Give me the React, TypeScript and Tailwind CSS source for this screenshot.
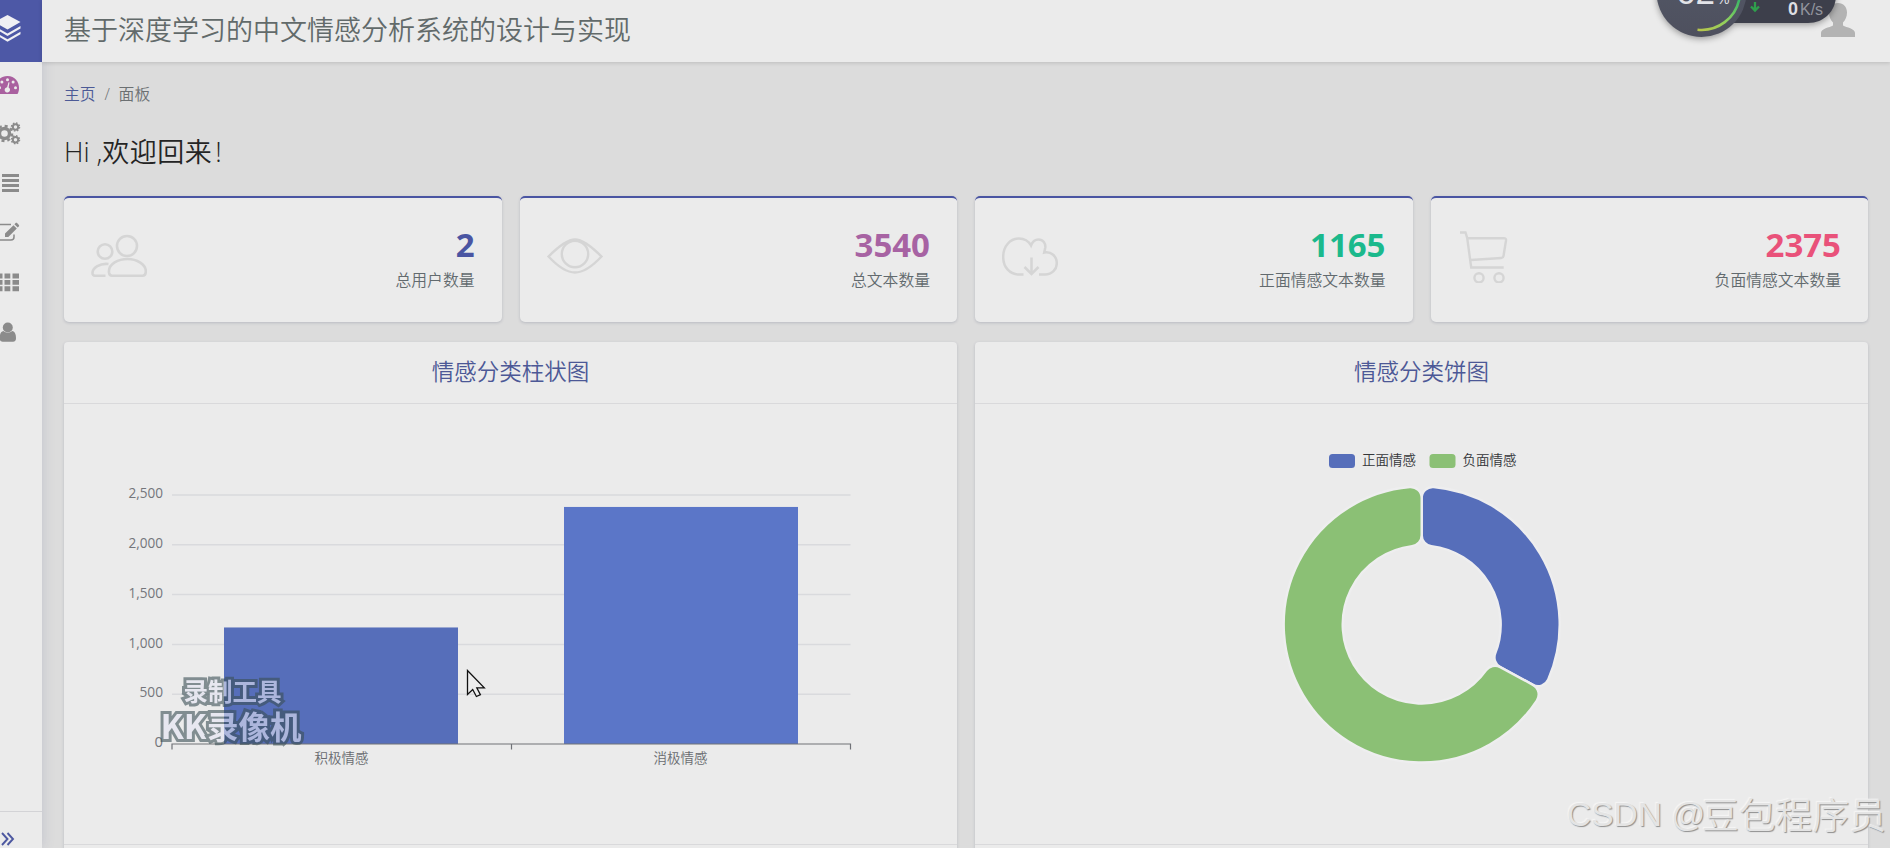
import type { ReactNode } from "react";

const CJK = "font-['Open_Sans','Noto_Sans_CJK_SC',sans-serif]";

type Stat = {
  label: string;
  value: string;
  color: string;
  icon: ReactNode;
};

function PeopleIcon() {
  return (
    <svg width="56" height="54" viewBox="0 0 56 54" fill="none" stroke="currentColor" strokeWidth="2.6">
      <circle cx="36" cy="17" r="10" />
      <circle cx="14" cy="22.5" r="7.3" />
      <path d="M18 43.5c-1-9 10-13.5 18.5-13.5S56 35 54.7 43.5c-.3 2.3-1.2 3.2-3 3.2H21c-1.8 0-2.700-1-3-3.200z" />
      <path d="M17.5 35c-9-1-15.5 4-16 8.5-.2 2.200.8 3.200 2.500 3.200h10.500" />
    </svg>
  );
}

function EyeIcon() {
  return (
    <svg width="56" height="54" viewBox="0 0 56 54" fill="none" stroke="currentColor" strokeWidth="2.4">
      <path d="M1.5 27.500C9 20 19 10.500 28 10.500S47 20 54.500 27.500C47 35.500 38 43.500 28 43.500S9 35.500 1.500 27.500z" />
      <circle cx="28" cy="25" r="13.200" />
    </svg>
  );
}

function CloudIcon() {
  return (
    <svg width="56" height="54" viewBox="0 0 56 54" fill="none" stroke="currentColor" strokeWidth="2.5">
      <path d="M21.5 45.500H17C8 45.500 1.200 38.500 1.200 28S8 9.500 17 9.500c5 0 9.500 2.500 12 7 1.500-4 4-6 7.500-6 4.500 0 7.500 4 6.700 8.500l-1 4.500c7-1.500 12.600 4 12.600 10.800C54.800 40.500 50 45.500 43 45.500h-6" />
      <path d="M29.500 28.500V45M22.500 38l7 7 7-7" />
    </svg>
  );
}

function CartIcon() {
  return (
    <svg width="56" height="54" viewBox="0 0 56 54" fill="none" stroke="currentColor" strokeWidth="2.4">
      <path d="M2 3.500h5.500L9.200 9l4 29.500h32.500" />
      <path d="M9.500 9.200H46c1.500 0 2.200.8 2 2.300L45.500 27c-.2 1.200-.9 1.900-2.200 2L13 31" />
      <circle cx="21" cy="48.800" r="4.600" />
      <circle cx="41" cy="48.800" r="4.600" />
    </svg>
  );
}

const stats: Stat[] = [
  { label: "总用户数量", value: "2", color: "text-[#4a55a2]", icon: <PeopleIcon /> },
  { label: "总文本数量", value: "3540", color: "text-[#a763a3]", icon: <EyeIcon /> },
  { label: "正面情感文本数量", value: "1165", color: "text-[#1bb98c]", icon: <CloudIcon /> },
  { label: "负面情感文本数量", value: "2375", color: "text-[#e9527a]", icon: <CartIcon /> },
];

function Sidebar() {
  return (
    <aside className="flex h-full w-[42px] shrink-0 flex-col overflow-hidden bg-[#ebebeb] text-[#8b8b8b] shadow-[0_0_12px_rgba(80,90,140,0.2)]">
      <div className="h-[62px] bg-[#4d58a6]">
        <svg width="42" height="62" viewBox="0 0 42 62" fill="#f0f0f4">
          <path d="M7.500 15 20.500 22 7.500 29.500-5.500 22z" />
          <path d="m-5.500 26 13 7.500 13-7.500v2.400l-13 7.500-13-7.500zM-5.500 31.800l13 7.500 13-7.500v2.400l-13 7.500-13-7.500z" />
        </svg>
      </div>
      <svg width="42" height="300" viewBox="0 62 42 300" fill="currentColor">
        {/* dashboard */}
        <path fill="#a9609f" d="M7.500 76C-.5 76-4 82-4 88c0 2.300.6 4.300 1.500 6h20c1-1.700 1.500-3.700 1.500-6 0-6-4-12-11.500-12z" />
        <g fill="#ebebeb">
          <circle cx="7.500" cy="79.700" r="1.500" />
          <circle cx="1.900" cy="82" r="1.500" />
          <circle cx="13.100" cy="82" r="1.500" />
          <circle cx="-.5" cy="87.700" r="1.500" />
          <circle cx="15.500" cy="87.700" r="1.500" />
          <path d="M9.500 82.500 8.600 87.500a2.700 2.700 0 1 1-1.500-.3l1.400-5z" />
        </g>
        {/* settings */}
        <g fill="none" stroke="currentColor">
          <circle cx="4.500" cy="133.500" r="5" strokeWidth="3.400" />
          <circle cx="4.500" cy="133.500" r="7.600" strokeWidth="2.400" strokeDasharray="2.980 2.980" />
          <circle cx="15.500" cy="127" r="2.700" strokeWidth="2" />
          <circle cx="15.500" cy="127" r="4" strokeWidth="1.500" strokeDasharray="1.570 1.570" />
          <circle cx="15.500" cy="139.800" r="2.700" strokeWidth="2" />
          <circle cx="15.500" cy="139.800" r="4" strokeWidth="1.500" strokeDasharray="1.570 1.570" />
        </g>
        {/* list */}
        <path d="M2 174h17v3H2zM2 179h17v3H2zM2 184h17v3H2zM2 189h17v3H2z" />
        {/* edit */}
        <path
          d="M11 224.500H-1a3 3 0 0 0-3 3V237a3 3 0 0 0 3 3H11a3 3 0 0 0 3-3v-2.500"
          fill="none"
          stroke="currentColor"
          strokeWidth="1.500"
        />
        <path d="m5 233.500 8.500-8.300 3.300 3.300-8.500 8.500H5zM14.400 224.300l1-1c.6-.6 1.300-.6 1.900 0l1.400 1.400c.6.600.6 1.300 0 1.900l-1 1z" />
        {/* grid */}
        <path d="M-4 273.500h6.500v5H-4zM4.500 273.500h5.800v5H4.500zM12.500 273.500H19v5h-6.500zM-4 280h6.500v4.700H-4zM4.500 280h5.800v4.700H4.500zM12.500 280H19v4.700h-6.500zM-4 286.200h6.500v5H-4zM4.500 286.200h5.800v5H4.500zM12.500 286.200H19v5h-6.500z" />
        {/* user */}
        <circle cx="7.800" cy="327.500" r="5" />
        <path d="M3.500 331c2.500 2.300 6 2.300 8.600 0 3 .5 3.900 3.500 3.900 7 0 2.500-1 3.700-3 3.700H2.700c-2 0-3-1.200-3-3.700 0-3.500.9-6.500 3.800-7z" />
      </svg>
      <div className="mt-auto h-[37px] border-t border-[#d3d3d6] pt-[19px]">
        <svg width="20" height="16" viewBox="0 0 20 16" fill="none" stroke="#4d58a0" strokeWidth="1.900">
          <path d="m2 2 5.500 6L2 14M7.500 2 13 8l-5.500 6" />
        </svg>
      </div>
    </aside>
  );
}

function StatCard({ label, value, color, icon }: Stat) {
  return (
    <div className="flex h-[126px] flex-1 items-start justify-between rounded-[5px] border-t-2 border-[#4a55a2] bg-[#ebebeb] pr-[27px] pl-[27px] shadow-[0_1px_3px_rgba(60,70,100,0.22)]">
      <div className="mt-[31px] text-[#d5d5d5]">{icon}</div>
      <div className="pt-[30px] text-right">
        <p className={`font-['Open_Sans',sans-serif] text-[33px] leading-[34px] font-bold ${color}`}>{value}</p>
        <p className="mt-[6px] text-[15.800px] leading-6 text-[#626a6e]">{label}</p>
      </div>
    </div>
  );
}

function Panel({ title, children }: { title: string; children: ReactNode }) {
  return (
    <section className="flex h-[540px] flex-1 flex-col rounded-[4px] bg-[#ebebeb] shadow-[0_1px_3px_rgba(60,70,100,0.22)]">
      <h2 className="h-[62px] border-b border-[#d9d9db] text-center text-[22.500px] leading-[60px] text-[#4c5896]">
        {title}
      </h2>
      <div className="h-[441px] border-b border-[#d9d9db]">{children}</div>
    </section>
  );
}

const ticks = [2500, 2000, 1500, 1000, 500, 0];
const bars = [
  { name: "积极情感", value: 1165, x: 160, fill: "#566eba" },
  { name: "消极情感", value: 2375, x: 500, fill: "#5b76c8" },
];

function BarChart() {
  const y = (value: number) => 340 - (value / 2500) * 249;

  return (
    <svg width="893" height="440" viewBox="0 0 893 440">
      {ticks.map((tick) => (
        <g key={tick}>
          {tick > 0 && <path d={`M108 ${y(tick)}H786.500`} stroke="#d9dadd" strokeWidth="1.500" />}
          <text
            x="99"
            y={y(tick) + 3.200}
            textAnchor="end"
            fill="#74767b"
            fontSize="14.800"
            textLength={tick >= 1000 ? 34.500 : tick ? 23.500 : undefined}
            lengthAdjust="spacingAndGlyphs"
            className="font-normal"
          >
            {tick.toLocaleString("en-US")}
          </text>
        </g>
      ))}
      {bars.map((bar, i) => (
        <g key={bar.name}>
          <rect x={bar.x} y={y(bar.value) - 0.500} width="234" height={340.500 - y(bar.value)} fill={bar.fill} />
          <text x={277.500 + i * 339} y="358.500" textAnchor="middle" fill="#696b70" fontSize="13.500">
            {bar.name}
          </text>
        </g>
      ))}
      <path d="M108 345.500V340H786.500v5.500M447.500 340v5.500" fill="none" stroke="#707277" strokeWidth="1.200" />
    </svg>
  );
}

// ring sector with rounded corners, angles in radians clockwise from the top
function sector(cx: number, cy: number, r0: number, r1: number, a0: number, a1: number, corner: number) {
  const at = (r: number, a: number) => `${cx + r * Math.sin(a)} ${cy - r * Math.cos(a)}`;
  const outer = Math.asin(corner / (r1 - corner));
  const inner = Math.asin(corner / (r0 + corner));
  const edgeOut = Math.sqrt((r1 - corner) ** 2 - corner ** 2);
  const edgeIn = Math.sqrt((r0 + corner) ** 2 - corner ** 2);
  const large = a1 - a0 > Math.PI ? 1 : 0;
  const c = `A${corner} ${corner} 0 0 1`;
  return [
    `M${at(edgeOut, a0)}`,
    `${c} ${at(r1, a0 + outer)}`,
    `A${r1} ${r1} 0 ${large} 1 ${at(r1, a1 - outer)}`,
    `${c} ${at(edgeOut, a1)}`,
    `L${at(edgeIn, a1)}`,
    `${c} ${at(r0, a1 - inner)}`,
    `A${r0} ${r0} 0 ${large} 0 ${at(r0, a0 + inner)}`,
    `${c} ${at(edgeIn, a0)}`,
    "Z",
  ].join(" ");
}

function DonutChart() {
  const full = Math.PI * 2;
  const split = (1165 / 3540) * full;

  return (
    <svg width="893" height="440" viewBox="0 0 893 440" fontSize="13.500" fill="#343639">
      <rect x="354" y="50" width="26" height="14" rx="3.500" fill="#566eba" />
      <text x="387" y="61.200">正面情感</text>
      <rect x="454.500" y="50" width="26" height="14" rx="3.500" fill="#8bc075" />
      <text x="487.500" y="61.200">负面情感</text>
      <g stroke="#eeeeef" strokeWidth="2.400">
        <path d={sector(446.700, 220.500, 79, 138, 0, split, 11)} fill="#566eba" />
        <path d={sector(446.700, 220.500, 79, 138, split, full, 11)} fill="#8bc075" />
      </g>
    </svg>
  );
}

function SpeedWidget() {
  return (
    <div className="absolute top-0 left-[1640px] h-[60px] w-[250px]">
      <svg width="250" height="60" viewBox="0 0 250 60">
        <defs>
          <linearGradient id="ring" x1="0" y1="1" x2="1" y2="0">
            <stop offset="0" stopColor="#b9c64c" />
            <stop offset=".5" stopColor="#8ed05e" />
            <stop offset="1" stopColor="#35b567" />
          </linearGradient>
          <linearGradient id="disc" x1="0" y1="0" x2="0" y2="1">
            <stop offset="0" stopColor="#545a69" />
            <stop offset="1" stopColor="#4e505e" />
          </linearGradient>
        </defs>
        {/* avatar */}
        <path
          fill="#b3b3b3"
          d="M198 3c5.500 0 9 4 9 9.500 0 4-1.500 7.500-4 10v3c3.500 2 12 3 12 7.500v4h-34v-4c0-4.500 8.500-5.500 12-7.500v-3c-2.500-2.500-4-6-4-10C189 7 192.500 3 198 3z"
        />
        <g className="drop-shadow-[0_2px_3px_rgba(0,0,0,0.35)]">
          <path d="M61-20h135V-5c0 16-12 28-28 28H61z" fill="#3d3f4b" />
          <circle cx="61.500" cy="-8" r="45" fill="url(#disc)" />
        </g>
        <path d="M57.500 29.700A38.500 38.500 0 0 0 99.500-2" fill="none" stroke="url(#ring)" strokeWidth="2.600" />
        <path d="M115 2v8M111 6.500l4 4 4-4" fill="none" stroke="#2f9f4c" strokeWidth="2.300" />
        <g className="font-['Liberation_Sans',sans-serif]">
          <text x="36" y="3.500" fontSize="35" fill="#e2e3e8">
            62
          </text>
          <text x="77" y="4" fontSize="14" fill="#e2e3e8">
            %
          </text>
          <text x="148" y="15" fontSize="18" fontWeight="bold" fill="#dddee2">
            0
          </text>
          <text x="160" y="15" fontSize="16" fill="#92949d">
            K/s
          </text>
        </g>
      </svg>
    </div>
  );
}

function RecorderMark() {
  return (
    <div className="absolute top-[673px] left-[156px] flex w-[150px] flex-col items-center gap-[4px] font-['Noto_Sans_CJK_SC',sans-serif] font-bold whitespace-nowrap text-[#e6e6f4] opacity-60 [-webkit-text-stroke:6px_#3b5056] [paint-order:stroke_fill]">
      <span className="pl-[3px] text-[24.500px] leading-[36px]">录制工具</span>
      <span className="-mt-[8px] text-[31.500px] leading-[40px]">
        <span className="text-[34px]">KK</span>录像机
      </span>
    </div>
  );
}

export default function App() {
  return (
    <div className={`relative flex h-[848px] w-[1890px] overflow-hidden bg-[#dcdcdc] font-[350] ${CJK}`}>
      <Sidebar />
      <div className="flex min-w-0 flex-1 flex-col">
        <header className="h-[62px] shrink-0 bg-[#ebebeb] pl-[22px] shadow-[0_1px_4px_rgba(0,0,0,0.15)]">
          <h1 className="text-[27px] leading-[60px] text-[#626a6a]">基于深度学习的中文情感分析系统的设计与实现</h1>
        </header>
        <main className="flex flex-col pr-[22px] pl-[22px]">
          <nav className="mt-[20px] flex h-6 text-[15.800px] leading-6 text-[#6c7072]">
            <span className="text-[#4c5a96]">主页</span>
            <span className="w-[23px] text-center">/</span>
            <span>面板</span>
          </nav>
          <p className="mt-[26px] h-10 text-[27px] leading-10 text-[#242424]">
            Hi ,<span className="tracking-[0.5px]">欢迎回来</span>
            <span className="ml-[3px]">!</span>
          </p>
          <div className="mt-6 flex gap-[18px]">
            {stats.map((stat) => (
              <StatCard key={stat.label} {...stat} />
            ))}
          </div>
          <div className="mt-5 flex gap-[18px]">
            <Panel title="情感分类柱状图">
              <BarChart />
            </Panel>
            <Panel title="情感分类饼图">
              <DonutChart />
            </Panel>
          </div>
        </main>
      </div>

      <SpeedWidget />
      <RecorderMark />
      <svg className="absolute top-[669px] left-[466px]" width="20" height="30" viewBox="0 0 20 30">
        <path
          d="M1.500 1.500v24l5.200-5 3.700 7 4-1.800-3.600-6.900h7.500z"
          fill="#ededed"
          stroke="#111"
          strokeWidth="1.300"
        />
      </svg>
      <div className="absolute top-[789px] left-[1567px] flex leading-[52px] whitespace-nowrap text-[#e4e4e4] [text-shadow:1px_1px_1px_#8f8f8f,-1px_-1px_1px_#f6f6f6]">
        <span className="w-[135px] font-['Liberation_Sans',sans-serif] text-[33.500px]">CSDN @</span>
        <span className="text-[36.800px]">豆包程序员</span>
      </div>
    </div>
  );
}
